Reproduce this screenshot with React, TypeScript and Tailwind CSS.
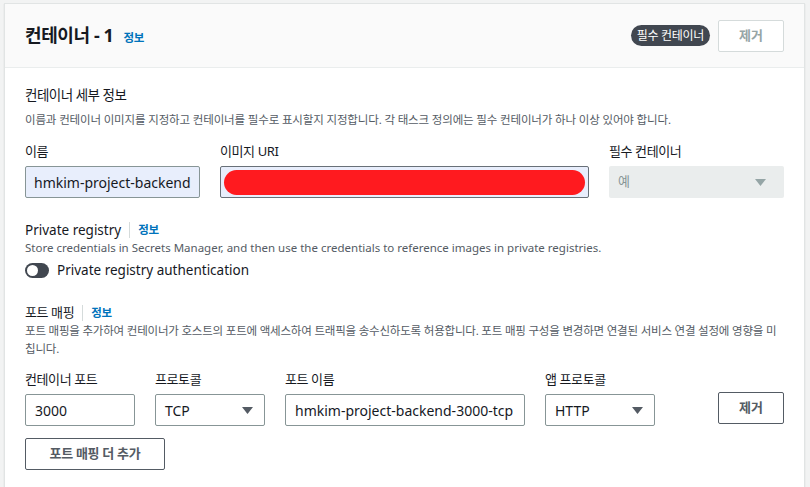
import React from "react";

const font = {
  fontFamily: '"Noto Sans", "Noto Sans CJK KR", sans-serif',
};

function InfoLink() {
  return (
    <span className="text-[11.5px] font-bold tracking-[-0.3px] text-[#0073bb]">
      정보
    </span>
  );
}

function Caret({ color = "#545b64" }: { color?: string }) {
  return (
    <svg width="11" height="7" viewBox="0 0 11 7">
      <path d="M0 0h11L5.5 7z" fill={color} />
    </svg>
  );
}

function Field({
  label,
  className,
  children,
}: {
  label?: string;
  className?: string;
  children: React.ReactNode;
}) {
  return (
    <div className={className}>
      <div className="h-5 text-[13px] leading-5 tracking-[-0.4px] text-[#16191f]">
        {label}
      </div>
      <div className="mt-[5px]">{children}</div>
    </div>
  );
}

function Select({ value }: { value: string }) {
  return (
    <div className="flex h-8 items-center justify-between rounded-[2px] border border-[#879596] bg-white pl-[9px] pr-[11px] text-[14px] text-[#16191f]">
      <span>{value}</span>
      <Caret />
    </div>
  );
}

function TextBox({ value }: { value: string }) {
  return (
    <div className="flex h-8 items-center rounded-[2px] border border-[#879596] bg-white px-[9px] text-[14px] text-[#16191f] whitespace-nowrap overflow-hidden">
      {value}
    </div>
  );
}

export default function App() {
  return (
    <div
      className="h-[487px] w-[810px] overflow-hidden bg-[#f2f3f3] pl-[4px] pr-[5px] pt-[3px]"
      style={font}
    >
      <div className="h-[500px] border border-b-0 border-[#e1e4e4] bg-white shadow-[0_1px_1px_rgba(0,28,36,0.15)]">
        <div className="flex h-[64px] items-center justify-between border-b border-[#eaeded] bg-[#fafafa] px-5">
          <div className="flex items-baseline gap-[10px]">
            <span className="text-[18px] font-bold tracking-[-0.4px] text-[#16191f]">
              컨테이너 - 1
            </span>
            <InfoLink />
          </div>
          <div className="flex items-center gap-2">
            <span className="flex h-[21px] items-center rounded-full bg-[#414750] px-[6px] text-[12px] tracking-[-0.3px] text-white">
              필수 컨테이너
            </span>
            <button className="flex h-8 w-[66px] items-center justify-center rounded-[2px] border border-[#d5dbdb] bg-white text-[13px] font-bold text-[#95a5a6]">
              제거
            </button>
          </div>
        </div>

        <div className="px-5 pt-[17px]">
          <div className="h-5 text-[13.5px] leading-5 tracking-[-0.5px] text-[#16191f]">
            컨테이너 세부 정보
          </div>
          <div className="mt-[7px] text-[11.5px] leading-4 tracking-[-0.15px] text-[#545b64]">
            이름과 컨테이너 이미지를 지정하고 컨테이너를 필수로 표시할지 지정합니다. 각 태스크 정의에는 필수 컨테이너가 하나 이상 있어야 합니다.
          </div>

          <div className="mt-[13px] grid grid-cols-[175px_1fr_175px] gap-5">
            <Field label="이름">
              <div className="flex h-8 items-center rounded-[2px] border border-[#879596] bg-[#e8eefc] px-[8px] text-[14px] text-[#16191f] whitespace-nowrap">
                hmkim-project-backend
              </div>
            </Field>
            <Field label="이미지 URI">
              <div className="flex h-8 items-center rounded-[2px] border border-[#687078] bg-[#e8eefc] px-[3px]">
                <div className="h-[25px] w-full rounded-full bg-[#ff1a1f]" />
              </div>
            </Field>
            <Field label="필수 컨테이너">
              <div className="flex h-8 items-center justify-between rounded-[2px] bg-[#eaeded] pl-[9px] pr-[18px] text-[13px] text-[#879596]">
                <span>예</span>
                <Caret color="#95a5a6" />
              </div>
            </Field>
          </div>

          <div className="mt-[22px] flex h-5 items-center text-[13.5px] leading-5 text-[#16191f]">
            <span>Private registry</span>
            <span className="mx-[8px] h-[16px] w-px bg-[#d5dbdb]" />
            <InfoLink />
          </div>
          <div className="h-4 text-[11.5px] leading-4 text-[#545b64]">
            Store credentials in Secrets Manager, and then use the credentials to reference images in private registries.
          </div>
          <div className="mt-1 flex h-5 items-center gap-[8px] text-[13.5px] text-[#16191f]">
            <span className="flex h-[15px] w-[24px] items-center rounded-full bg-[#414750] px-[2px]">
              <span className="h-[11px] w-[11px] rounded-full bg-white" />
            </span>
            <span>Private registry authentication</span>
          </div>

          <div className="mt-[23px] flex h-[19px] items-center text-[13px] tracking-[-0.4px] text-[#16191f]">
            <span>포트 매핑</span>
            <span className="mx-[8px] h-[16px] w-px bg-[#d5dbdb]" />
            <InfoLink />
          </div>
          <div className="text-[11.5px] leading-[18px] tracking-[-0.2px] text-[#545b64]">
            포트 매핑을 추가하여 컨테이너가 호스트의 포트에 액세스하여 트래픽을 송수신하도록 허용합니다. 포트 매핑 구성을 변경하면 연결된 서비스 연결 설정에 영향을 미
            <br />
            칩니다.
          </div>

          <div className="mt-[11px] flex items-end">
            <Field label="컨테이너 포트" className="w-[110px]">
              <TextBox value="3000" />
            </Field>
            <Field label="프로토콜" className="ml-5 w-[110px]">
              <Select value="TCP" />
            </Field>
            <Field label="포트 이름" className="ml-5 w-[240px]">
              <TextBox value="hmkim-project-backend-3000-tcp" />
            </Field>
            <Field label="앱 프로토콜" className="ml-5 w-[110px]">
              <Select value="HTTP" />
            </Field>
            <button className="mb-[2px] ml-auto flex h-8 w-[66px] items-center justify-center rounded-[2px] border border-[#545b64] bg-white text-[13px] font-bold text-[#545b64]">
              제거
            </button>
          </div>

          <button className="mt-3 flex h-8 w-[140px] items-center justify-center rounded-[2px] border border-[#545b64] bg-white text-[13px] font-bold tracking-[-0.3px] text-[#545b64]">
            포트 매핑 더 추가
          </button>
        </div>
      </div>
    </div>
  );
}
